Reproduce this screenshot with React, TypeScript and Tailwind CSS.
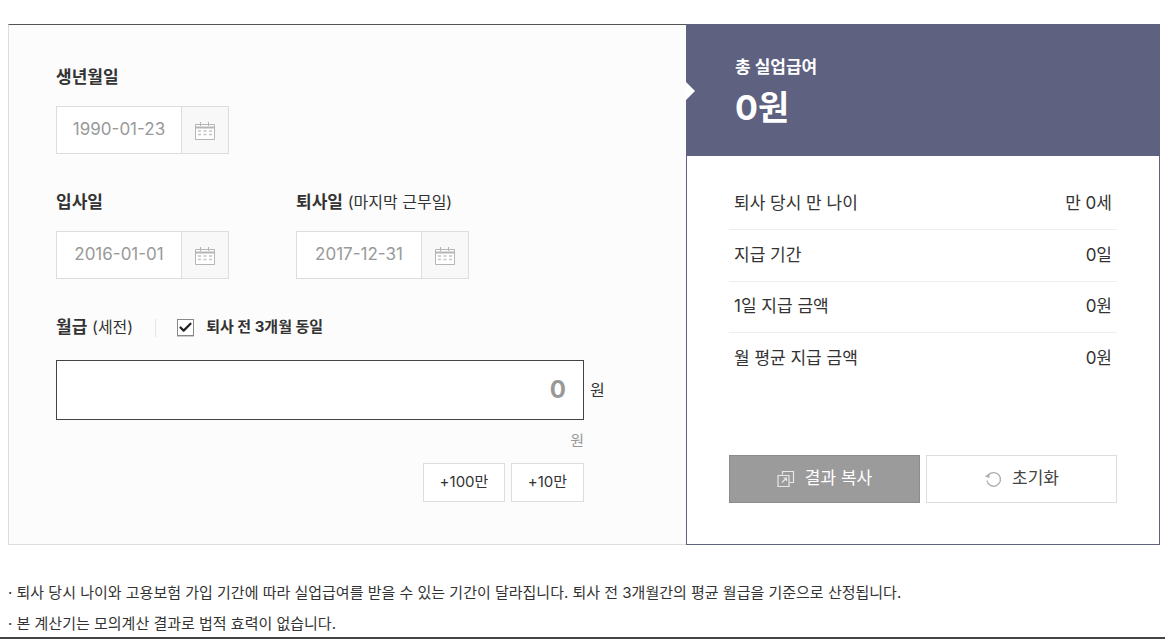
import { Check } from 'lucide-react';

const FONT = "font-['Inter','Noto_Sans_CJK_KR','Noto_Sans',sans-serif]";

const CalendarIcon = () => (
  <svg width="20" height="18" viewBox="0 0 20 18" fill="none" stroke="#b5b5b5">
    <path d="M0.5 2.5h19v15h-19z" fill="#fff" />
    <path d="M0.5 5.5h19" strokeWidth="2" />
    <path d="M5.5 0v4M13.5 0v4" />
    <path d="M3 9h3M8.5 9h3M14 9h3M3 12.5h3M8.5 12.5h3M14 12.5h3" stroke="#c4c4c4" strokeWidth="1.5" />
  </svg>
);

function DateInput({ value }: { value: string }) {
  return (
    <div className="flex h-12 w-[173px] border border-[#ddd] bg-white">
      <div className="flex w-[124px] items-center justify-center text-[17px] text-[#999]">{value}</div>
      <div className="flex flex-1 items-center justify-center border-l border-[#ddd] bg-[#f8f8f8] pt-0.5">
        <CalendarIcon />
      </div>
    </div>
  );
}

const rows = [
  ['퇴사 당시 만 나이', '만 0세'],
  ['지급 기간', '0일'],
  ['1일 지급 금액', '0원'],
  ['월 평균 지급 금액', '0원'],
];

export default function App() {
  return (
    <div className={`${FONT} h-[639px] overflow-hidden bg-white text-[#333]`}>
      <div className="border-b-2 border-[#444] h-[639px] px-2 pt-6">
        <div className="flex h-[521px] w-[1152px]">
          {/* Input form */}
          <div className="w-[678px] border border-t-[#555] border-[#ddd] border-r-0 bg-[#fcfcfc] pl-[47px] pt-[39px]">
            <div className="h-[27px] text-[17px] leading-[27px] font-bold">생년월일</div>
            <div className="mt-[15px]">
              <DateInput value="1990-01-23" />
            </div>

            <div className="mt-[35px] flex gap-[67px]">
              <div>
                <div className="h-[27px] text-[17px] leading-[27px] font-bold">입사일</div>
                <div className="mt-[15px]">
                  <DateInput value="2016-01-01" />
                </div>
              </div>
              <div>
                <div className="h-[27px] text-[17px] leading-[27px]">
                  <span className="font-bold">퇴사일</span> <span className="text-[16px]">(마지막 근무일)</span>
                </div>
                <div className="mt-[15px]">
                  <DateInput value="2017-12-31" />
                </div>
              </div>
            </div>

            <div className="mt-[35px] flex h-[27px] items-center">
              <div className="text-[17px] leading-[27px]">
                <span className="font-bold">월급</span> <span className="text-[16px]">(세전)</span>
              </div>
              <div className="ml-[22px] h-[18px] w-px bg-[#e4e4e4]" />
              <div className="ml-[21px] flex h-[17px] w-[17px] items-center justify-center border border-[#888] bg-white shadow-[0_1px_0_#ccc]">
                <Check size={15} strokeWidth={3.5} className="text-[#222]" />
              </div>
              <div className="ml-[12px] text-[15px] font-bold">퇴사 전 3개월 동일</div>
            </div>

            <div className="mt-[19px] flex items-center">
              <div className="flex h-[60px] w-[528px] items-center justify-end border border-[#444] bg-white pr-[17px] text-[24px] font-bold text-[#999]">
                0
              </div>
              <span className="ml-1.5 text-[16px]">원</span>
            </div>
            <div className="mt-[10px] w-[528px] text-right text-[15px] leading-[22px] text-[#999]">원</div>
            <div className="mt-[11px] flex w-[528px] justify-end gap-1.5">
              <button className="h-[39px] w-[82px] border border-[#ddd] bg-white text-[15px]">+100만</button>
              <button className="h-[39px] w-[73px] border border-[#ddd] bg-white text-[15px]">+10만</button>
            </div>
          </div>

          {/* Result */}
          <div className="flex w-[474px] flex-col border border-t-0 border-[#5e6180] bg-white">
            <div className="relative -mx-px h-[132px] bg-[#5e6180] pl-[49px] pt-[29px] text-white">
              <div className="absolute top-[58px] left-0 h-0 w-0 border-y-[9px] border-l-[9px] border-y-transparent border-l-white" />
              <div className="text-[17px] leading-[28px] font-bold">총 실업급여</div>
              <div className="mt-[4px] text-[34px] leading-[46px] font-bold">0원</div>
            </div>

            <div className="mx-[42px] mt-[23px]">
              {rows.map(([label, value], i) => (
                <div
                  key={label}
                  className={`flex h-[51.3px] items-center justify-between px-[5px] text-[17px] ${
                    i < rows.length - 1 ? 'border-b border-[#eee]' : ''
                  }`}
                >
                  <span>{label}</span>
                  <span>{value}</span>
                </div>
              ))}
            </div>

            <div className="mx-[42px] mt-[71px] flex gap-1.5">
              <button className="flex h-12 flex-1 items-center justify-center gap-[10px] border border-[#8c8c8c] bg-[#9b9b9b] text-[17px] text-white">
                <svg width="18" height="18" viewBox="0 0 18 18" fill="none" stroke="#e8e8e8" strokeWidth="1.2">
                  <path d="M5.5 4.5v-3h11v11h-4" />
                  <path d="M1 5.5h11v11H1z" />
                  <path d="M5 12.5l4.5-4.5M6.5 8h3v3" />
                </svg>
                결과 복사
              </button>
              <button className="flex h-12 flex-1 items-center justify-center gap-[10px] border border-[#ddd] bg-white text-[17px] text-[#444]">
                <svg width="18" height="18" viewBox="0 0 18 18" fill="none" stroke="#b0b0b0" strokeWidth="1.4">
                  <path d="M4.5 5A6.8 6.8 0 1 1 3 10.5" />
                  <path d="M0.8 6.5l4.7-3.4v5z" fill="#b0b0b0" stroke="none" />
                </svg>
                초기화
              </button>
            </div>
          </div>
        </div>

        <div className="mt-[32px] text-[15px] leading-[31px]">
          <p>· 퇴사 당시 나이와 고용보험 가입 기간에 따라 실업급여를 받을 수 있는 기간이 달라집니다. 퇴사 전 3개월간의 평균 월급을 기준으로 산정됩니다.</p>
          <p>· 본 계산기는 모의계산 결과로 법적 효력이 없습니다.</p>
        </div>
      </div>
    </div>
  );
}
